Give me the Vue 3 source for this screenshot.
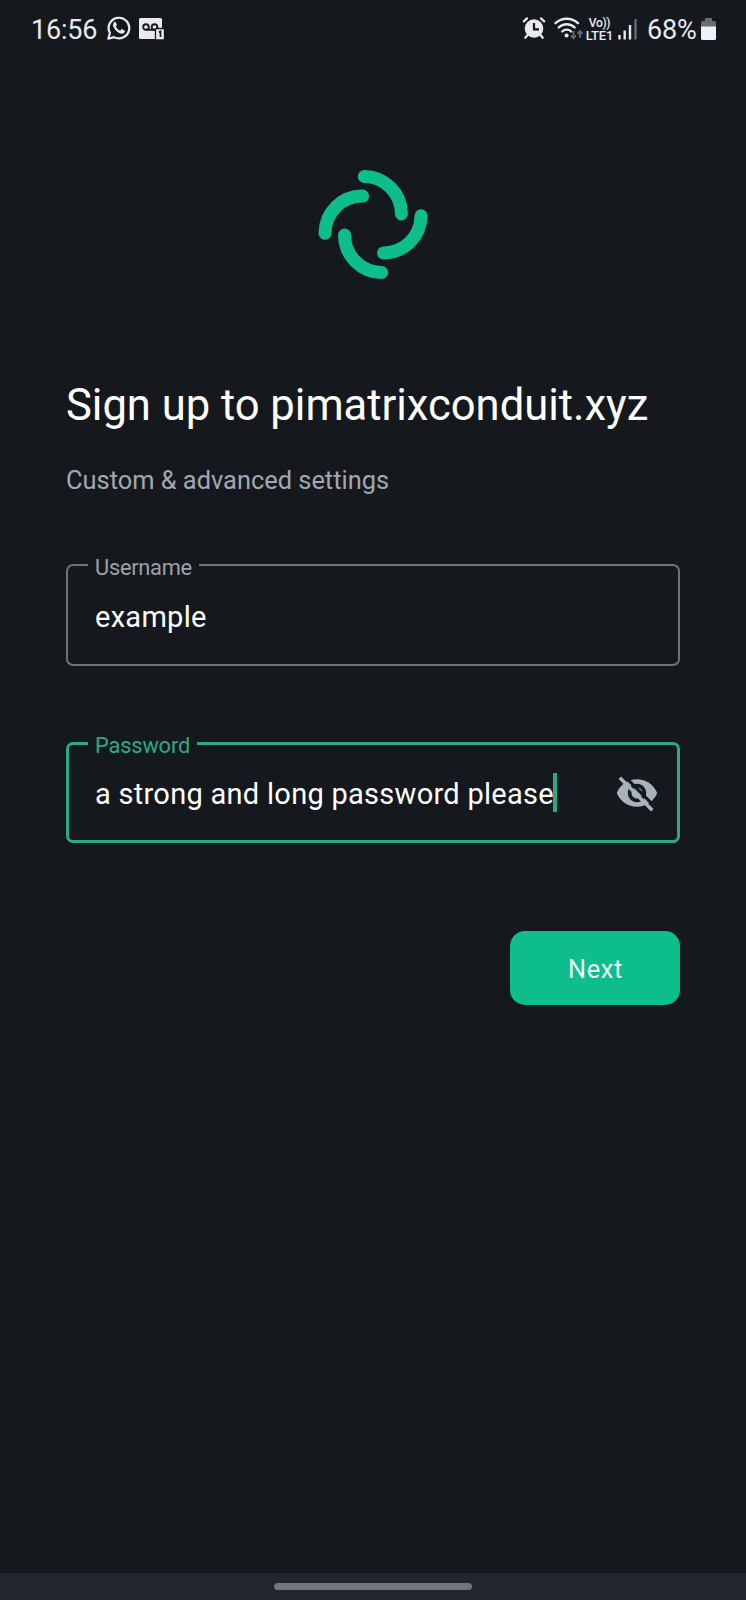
<script setup>
import { ref } from 'vue'

const username = ref('example')
const password = ref('a strong and long password please')
const turns = [0, 90, 180, 270]
</script>

<template>
  <div class="screen">
    <header class="status">
      <span class="clock">16:56</span>
      <svg class="whatsapp" width="24" height="24" viewBox="0 0 24 24">
        <path d="M1.3 22.7l1.6-5.7a10.3 10.3 0 1 1 4.1 4.1z" fill="none" stroke="#e9eaee" stroke-width="2.2" stroke-linejoin="round" />
        <path d="M8.6 6.2c-.5-.5-1-.4-1.5.1C4.200 9.200 7.600 13.500 10.300 15.700c2.500 2 5.900 3 7.400.3.400-.8.300-1.300-.2-1.600l-2.300-1.200c-.5-.2-.9 0-1.200.5l-.8 1c-1.900-.6-3.600-2.300-4.400-4.100l.9-1.200c.2-.4.2-.8 0-1.200z" fill="#e9eaee" />
      </svg>
      <svg class="voicemail" width="26" height="22" viewBox="0 0 26 22">
        <path d="M1.500 0h20a1.500 1.500 0 0 1 1.500 1.500v18a1.500 1.500 0 0 1-1.500 1.500h-20a1.500 1.500 0 0 1-1.500-1.500v-18a1.500 1.500 0 0 1 1.500-1.500z" fill="#e9eaee" />
        <g fill="none" stroke="#181b20" stroke-width="1.900">
          <circle cx="7" cy="9" r="2.800" />
          <circle cx="15.500" cy="9" r="2.800" />
          <path d="M7 11.800h9" />
        </g>
        <rect x="16.500" y="10.500" width="9" height="11.500" rx="1.500" fill="#e9eaee" stroke="#181b20" stroke-width="1.300" />
        <path d="M19.800 14.200l1.700-.8v5.500" fill="none" stroke="#181b20" stroke-width="1.700" />
      </svg>
      <span class="spacer"></span>
      <svg class="alarm" width="24" height="24" viewBox="0 0 24 24">
        <circle cx="12" cy="12.500" r="9.300" fill="#e9eaee" />
        <path d="M1.800 5.300l3.200-2.900M22.200 5.300l-3.200-2.900M5.500 19l-2.200 2.700M18.500 19l2.200 2.700" stroke="#e9eaee" stroke-width="2.300" stroke-linecap="round" />
        <path d="M12 7v6.300h5" fill="none" stroke="#15191e" stroke-width="2.200" />
      </svg>
      <svg class="wifi" width="30" height="24" viewBox="0 0 30 24">
        <g fill="none" stroke="#e9eaee" stroke-width="2.300" stroke-linecap="round">
          <path d="M1.500 6.200a16.500 16.500 0 0 1 22.500 0" />
          <path d="M4.700 10.500a11.500 11.500 0 0 1 16 0" />
          <path d="M8.200 14.500a6.500 6.500 0 0 1 9 0" />
        </g>
        <circle cx="12.600" cy="18.500" r="2" fill="#e9eaee" />
        <path d="M19.500 14v7M17 18.500l2.500 2.800 2.500-2.800M26 21v-7M23.500 16.800l2.500-2.800 2.500 2.800" fill="none" stroke="#666a70" stroke-width="1.800" />
      </svg>
      <span class="network"><span class="vo">Vo))</span><span class="lte">LTE1</span></span>
      <svg class="signal" width="20" height="22" viewBox="0 0 20 22">
        <path d="M1.500 17v4.500M6.700 12.500v9M12 7v14.500" stroke="#e9eaee" stroke-width="2.400" />
        <path d="M17.500 1v20.500" stroke="#666a70" stroke-width="2.400" />
      </svg>
      <span class="percent">68%</span>
      <svg class="battery" width="15" height="22" viewBox="0 0 15 22">
        <path d="M4 0h7v3h2.500a1.500 1.500 0 0 1 1.500 1.500v4.500H0V4.500A1.500 1.500 0 0 1 1.500 3H4z" fill="#696c71" />
        <path d="M0 8.500h15v12a1.500 1.500 0 0 1-1.500 1.500h-12A1.500 1.500 0 0 1 0 20.500z" fill="#f0f1f4" />
      </svg>
    </header>

    <svg class="logo" width="110" height="110" viewBox="-55 -55.500 110 110">
      <path
        v-for="turn in turns"
        :key="turn"
        d="M-8.700-48A37.300 37.300 0 0 1 28.400-10.500"
        :transform="`rotate(${turn})`"
        fill="none"
        stroke="#0dbd8b"
        stroke-width="13"
        stroke-linecap="round"
      />
    </svg>

    <main class="form">
      <h1>Sign up to pimatrixconduit.xyz</h1>
      <p class="subtitle">Custom &amp; advanced settings</p>

      <fieldset class="field">
        <legend><span class="label">Username</span></legend>
        <div class="row"><span class="value">{{ username }}</span></div>
      </fieldset>

      <fieldset class="field active">
        <legend><span class="label">Password</span></legend>
        <div class="row">
          <span class="value">{{ password }}</span>
          <i class="caret"></i>
          <svg class="eye" width="44" height="44" viewBox="0 0 24 24">
            <path d="M12 4.500C7 4.500 2.730 7.610 1 12c1.730 4.390 6 7.500 11 7.500s9.270-3.110 11-7.500c-1.730-4.390-6-7.500-11-7.500zM12 17c-2.760 0-5-2.240-5-5s2.240-5 5-5 5 2.240 5 5-2.240 5-5 5zm0-8c-1.660 0-3 1.340-3 3s1.340 3 3 3 3-1.340 3-3-1.340-3-3-3z" fill="#a9b2bc" fill-rule="evenodd" />
            <path d="M4.600 2.300L22 19.700" stroke="#15191e" stroke-width="1.700" />
            <path d="M2.640 3.640L20.360 21.360" stroke="#a9b2bc" stroke-width="1.900" />
          </svg>
        </div>
      </fieldset>

      <button class="next" type="button">Next</button>
    </main>

    <footer class="navbar"><i class="handle"></i></footer>
  </div>
</template>

<style>
body {
  background: #15191e;
}
</style>

<style scoped>
.screen {
  width: 746px;
  height: 1600px;
  display: flex;
  flex-direction: column;
  overflow: hidden;
  background: #15191e;
  color: #fff;
  font-family: Roboto, "Noto Sans", sans-serif;
}
.status {
  display: flex;
  height: 58px;
  padding: 0 30px 0 31px;
  box-sizing: border-box;
  align-items: center;
  color: #e9eaee;
}
svg {
  display: block;
  flex: none;
}
.clock,
.percent {
  font-size: 27px;
  line-height: 32px;
  padding-top: 2px;
  letter-spacing: -0.2px;
  white-space: nowrap;
}
.clock {
  width: 76px;
}
.whatsapp {
  margin-bottom: 2px;
}
.voicemail {
  margin-left: 8px;
}
.spacer {
  flex: 1;
}
.alarm {
  margin-bottom: 2px;
}
.wifi {
  margin-left: 8px;
}
.network {
  display: flex;
  flex-direction: column;
  align-items: center;
  width: 29px;
  margin-left: 1px;
  font-weight: 500;
  white-space: nowrap;
}
.vo {
  font-size: 12px;
  line-height: 12px;
  letter-spacing: -0.3px;
}
.lte {
  font-size: 13px;
  line-height: 13px;
  letter-spacing: -0.2px;
}
.signal {
  margin-left: 4px;
}
.percent {
  width: 54px;
  margin-left: 9px;
}
.logo {
  align-self: center;
  margin-top: 111px;
}
.form {
  flex: 1;
  display: flex;
  flex-direction: column;
  padding: 101px 66px 0;
}
h1 {
  margin: 0;
  font-size: 43.6px;
  line-height: 52px;
  font-weight: 400;
  letter-spacing: -0.03px;
  white-space: nowrap;
}
.subtitle {
  margin: 33px 0 0;
  font-size: 25.4px;
  line-height: 30px;
  color: #a2a8b2;
}
.field {
  height: 112px;
  margin: 59px 0 0;
  padding: 0 0 0 20px;
  box-sizing: border-box;
  min-width: 0;
  border: 2px solid #6f7276;
  border-radius: 7px;
}
.field.active {
  height: 111px;
  margin-top: 66px;
  padding-left: 19px;
  border: 3px solid #2bab82;
}
legend {
  height: 22px;
  padding: 0 7px;
}
.label {
  display: block;
  font-size: 21.8px;
  line-height: 28px;
  letter-spacing: -0.25px;
  color: #9fa1a5;
}
.active .label {
  line-height: 27px;
  letter-spacing: -0.15px;
  color: #2bab82;
}
.row {
  display: flex;
  align-items: center;
  height: 82px;
  padding-left: 7px;
}
.active .row {
  height: 80px;
}
.value {
  font-size: 29px;
  line-height: 34px;
  letter-spacing: 0.28px;
  white-space: nowrap;
}
.caret {
  width: 4px;
  height: 39px;
  margin-top: -3px;
  margin-left: -1px;
  background: #2bab82;
}
.eye {
  margin-left: auto;
  margin-right: 18px;
  margin-top: -3px;
}
.next {
  align-self: flex-end;
  width: 170px;
  height: 74px;
  margin-top: 88px;
  padding: 2px 0 0 1px;
  border: 0;
  border-radius: 15px;
  background: #0dbd8b;
  color: #e9fff9;
  font: 400 25.4px/30px Roboto, "Noto Sans", sans-serif;
  letter-spacing: 0.6px;
}
.navbar {
  display: flex;
  height: 27px;
  padding-top: 10px;
  box-sizing: border-box;
  justify-content: center;
  background: #21252d;
}
.handle {
  width: 198px;
  height: 7px;
  border-radius: 4px;
  background: #72757e;
}
</style>
